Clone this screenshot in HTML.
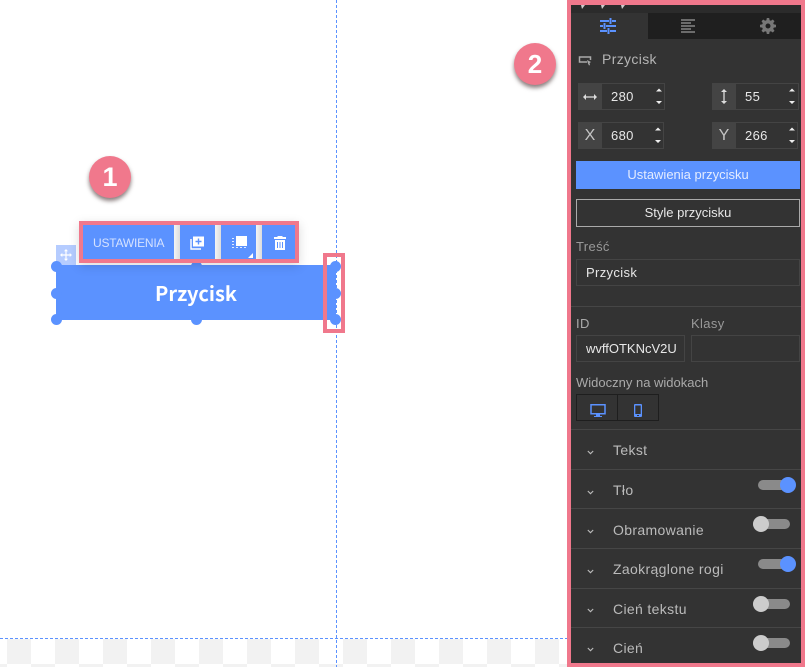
<!DOCTYPE html>
<html><head><meta charset="utf-8"><style>
html,body{margin:0;padding:0;background:#fff}
#p{position:relative;width:805px;height:667px;overflow:hidden;background:#fff;font-family:"Liberation Sans",sans-serif}
#p div,#p svg{position:absolute;box-sizing:border-box}
.t{white-space:nowrap;font-size:13px;line-height:16px;letter-spacing:.35px;color:#bbb}
.h{width:11px;height:11px;border-radius:50%;background:#5b92ff}
.lb{background:#444;color:#c4c4c4;text-align:center;font-size:16px;line-height:27px}
.in{border:1px solid #444;height:27px}
.v{color:#e8e8e8}
.ln{left:571px;width:230px;height:1px;background:#464646}
.s{background:linear-gradient(90deg,#f4f4f4,#dcdcdc);width:6px;top:225px;height:34px}
.tr{height:10px;border-radius:5px;background:#8a8a8a}
.kn{width:16px;height:16px;border-radius:50%}
</style></head><body><div id="p">
<svg style="left:0;top:639px" width="567" height="28"><g fill="#f2f2f2"><path d="M7 0h24v25H7zM55 0h24v25H55zM103 0h24v25h-24zM151 0h24v25h-24zM199 0h24v25h-24zM247 0h24v25h-24zM295 0h24v25h-24zM343 0h24v25h-24zM391 0h24v25h-24zM439 0h24v25h-24zM487 0h24v25h-24zM535 0h24v25h-24z"/><path d="M0 25h7v3H0zM31 25h24v3H31zM79 25h24v3H79zM127 25h24v3h-24zM175 25h24v3h-24zM223 25h24v3h-24zM271 25h24v3h-24zM319 25h24v3h-24zM367 25h24v3h-24zM415 25h24v3h-24zM463 25h24v3h-24zM511 25h24v3h-24zM559 25h8v3h-8z"/></g></svg>
<svg style="left:0;top:0" width="567" height="667"><path d="M0 638.5H567M336.5 0V667" stroke="#5b92ff" stroke-width="1" stroke-dasharray="3 2" fill="none"/></svg>

<div style="left:89px;top:156px;width:42px;height:42px;border-radius:50%;background:#f0788c;box-shadow:0 3px 4px rgba(60,40,40,.6);color:#fff;font-size:27px;font-weight:bold;line-height:42px;text-align:center">1</div>
<div style="left:514px;top:43px;width:42px;height:42px;border-radius:50%;background:#f0788c;box-shadow:0 3px 4px rgba(60,40,40,.6);color:#fff;font-size:26px;font-weight:bold;line-height:42px;text-align:center">2</div>

<div style="left:56px;top:245px;width:20px;height:20px;background:#b5ccff"></div>
<svg style="left:60px;top:249px" width="12" height="12" viewBox="0 0 12 12"><path d="M6 2v8M2 6h8" stroke="#fff" stroke-width="1.200" fill="none"/><path d="M6 0l2 2.300H4zM6 12l2-2.300H4zM0 6l2.300-2v4zM12 6L9.700 4v4z" fill="#fff"/></svg>

<div style="left:56px;top:265px;width:280px;height:55px;background:#5b92ff;color:#fff;font:bold 20px/55px 'Noto Sans CJK JP',sans-serif;text-align:center">Przycisk</div>

<div style="left:323px;top:253px;width:22px;height:80px;border:4px solid #f0788c"></div>
<div class="h" style="left:51px;top:261px"></div><div class="h" style="left:191px;top:261px"></div><div class="h" style="left:330px;top:261px"></div>
<div class="h" style="left:51px;top:288px"></div><div class="h" style="left:330px;top:288px"></div>
<div class="h" style="left:51px;top:314px"></div><div class="h" style="left:191px;top:314px"></div><div class="h" style="left:330px;top:314px"></div>

<div style="left:79px;top:221px;width:220px;height:42px;background:#5b92ff;border:4px solid #f0788c;box-shadow:0 3px 10px rgba(0,0,0,.15)"></div>
<div class="t" style="left:93px;top:235px;font-size:12px;color:#d5e2ff;letter-spacing:-.2px">USTAWIENIA</div>
<div class="s" style="left:174px"></div><div class="s" style="left:215px"></div><div class="s" style="left:256px"></div>
<svg style="left:190px;top:235px" width="15" height="15" viewBox="0 0 15 15"><path d="M3 1.500h11v10H3zM7.800 3.500v2.300H5.500v1.400h2.300v2.300h1.400V7.200h2.300V5.800H9.200V3.500z" fill="#fff" fill-rule="evenodd"/><path d="M1 4v10h10" fill="none" stroke="#fff" stroke-width="1.400"/></svg>
<svg style="left:232px;top:236px" width="15" height="14" viewBox="0 0 15 14"><rect x="4" y="0" width="11" height="10" fill="#fff"/><path d="M0 2h2v1H0zM0 5h2v1H0zM0 8h2v1H0zM0 11h2v1H0zM4 11h2v1H4zM8 11h2v1H8zM12 11h2v1h-2z" fill="#fff" opacity=".8"/></svg>
<svg style="left:248px;top:253px" width="5" height="5"><path d="M5 0v5H0z" fill="#fff"/></svg>
<svg style="left:274px;top:236px" width="12" height="14" viewBox="0 0 12 14"><path d="M4 0h4l1 1h3v2H0V1h3zM1 4h10v10H1zM3 6v6h1V6zM5.500 6v6h1V6zM8 6v6h1V6z" fill="#fff" fill-rule="evenodd"/></svg>

<div style="left:567px;top:0;width:238px;height:667px;background:#333;border:4px solid #f0788c;border-top-width:5px"></div>
<div style="left:571px;top:5px;width:230px;height:8px;background:#2b2b2b"></div>
<svg style="left:579px;top:5px" width="50" height="5"><path d="M2 0h4L3 4zM22 0h4L23 4zM42 0h4L43 4z" fill="#ccc"/></svg>
<div style="left:571px;top:13px;width:230px;height:26px;background:#1f1f1f"></div>
<div style="left:571px;top:13px;width:77px;height:26px;background:#333"></div>
<svg style="left:600px;top:18px" width="16" height="16" viewBox="0 0 16 16"><path d="M0 3h9M12 3h4M0 8h3M6 8h10M0 13h7M10 13h6" stroke="#5b92ff" stroke-width="2" fill="none"/><path d="M10.500 0v6M4.500 5v6M8.500 10v6" stroke="#5b92ff" stroke-width="2" fill="none"/></svg>
<svg style="left:681px;top:19px" width="14" height="15" viewBox="0 0 14 15"><path d="M0 1h14M0 4h10M0 7h14M0 10h10M0 13h14" stroke="#777" stroke-width="1.800" fill="none"/></svg>
<svg style="left:760px;top:18px" width="16" height="16" viewBox="0 0 16 16"><path d="M6.800 0h2.400l.4 2.200 1.300.6 1.900-1.300 1.700 1.700-1.300 1.900.6 1.300 2.200.4v2.400l-2.200.4-.6 1.300 1.300 1.900-1.700 1.700-1.900-1.300-1.300.6-.4 2.200H6.800l-.4-2.200-1.300-.6-1.900 1.300-1.700-1.700 1.300-1.900-.6-1.300L0 9.200V6.800l2.200-.4.6-1.300-1.300-1.900 1.700-1.700 1.900 1.300 1.300-.6zM8 5.500a2.500 2.500 0 1 0 0 5 2.500 2.500 0 0 0 0-5z" fill="#777" fill-rule="evenodd"/></svg>

<svg style="left:578px;top:55px" width="14" height="11" viewBox="0 0 14 11"><path d="M9 7H1.500V2h11v3" fill="none" stroke="#aaa" stroke-width="1.500"/><path d="M9 5l4 2-1.500 1 .5 2-1 .5-1-2z" fill="#aaa"/></svg>
<div class="t" style="left:602px;top:51px;font-size:14px;color:#b5b5b5">Przycisk</div>

<div class="in" style="left:578px;top:83px;width:87px"></div><div class="lb" style="left:578px;top:83px;width:24px;height:27px"></div>
<svg style="left:583px;top:93px" width="14" height="8" viewBox="0 0 14 8"><path d="M2 4h10" stroke="#ddd" stroke-width="1.300"/><path d="M0 4l3-3v6zM14 4l-3-3v6z" fill="#ddd"/></svg>
<div class="t v" style="left:611px;top:89px">280</div>
<div class="in" style="left:712px;top:83px;width:87px"></div><div class="lb" style="left:712px;top:83px;width:24px;height:27px"></div>
<svg style="left:720px;top:89px" width="8" height="15" viewBox="0 0 8 15"><path d="M4 2v11" stroke="#ddd" stroke-width="1.300"/><path d="M4 0l3 3H1zM4 15l3-3H1z" fill="#ddd"/></svg>
<div class="t v" style="left:745px;top:89px">55</div>
<div class="in" style="left:578px;top:122px;width:86px"></div><div class="lb" style="left:578px;top:122px;width:24px;height:27px">X</div>
<div class="t v" style="left:611px;top:128px">680</div>
<div class="in" style="left:712px;top:122px;width:86px"></div><div class="lb" style="left:712px;top:122px;width:24px;height:27px">Y</div>
<div class="t v" style="left:745px;top:128px">266</div>
<svg style="left:655px;top:87px" width="8" height="20"><path d="M1 4.500l3-3 3 3zM1 14l3 3 3-3z" fill="#eee"/></svg>
<svg style="left:788px;top:87px" width="8" height="20"><path d="M1 4.500l3-3 3 3zM1 14l3 3 3-3z" fill="#eee"/></svg>
<svg style="left:654px;top:126px" width="8" height="20"><path d="M1 4.500l3-3 3 3zM1 14l3 3 3-3z" fill="#eee"/></svg>
<svg style="left:788px;top:126px" width="8" height="20"><path d="M1 4.500l3-3 3 3zM1 14l3 3 3-3z" fill="#eee"/></svg>

<div style="left:576px;top:161px;width:224px;height:28px;background:#5b92ff;color:#e4ecff;font-size:13px;line-height:28px;text-align:center">Ustawienia przycisku</div>
<div style="left:576px;top:199px;width:224px;height:28px;border:1px solid #aaa;color:#e8e8e8;font-size:13px;line-height:26px;text-align:center">Style przycisku</div>

<div class="t" style="left:576px;top:239px;color:#999">Treść</div>
<div class="in" style="left:576px;top:259px;width:224px"></div>
<div class="t v" style="left:586px;top:265px">Przycisk</div>
<div class="ln" style="top:306px"></div>

<div class="t" style="left:576px;top:316px;color:#aaa">ID</div>
<div class="t" style="left:691px;top:316px;color:#999">Klasy</div>
<div class="in" style="left:576px;top:335px;width:109px"></div>
<div class="t v" style="left:586px;top:341px;letter-spacing:0">wvffOTKNcV2U</div>
<div class="in" style="left:691px;top:335px;width:109px"></div>

<div class="t" style="left:576px;top:375px;color:#aaa;letter-spacing:0">Widoczny na widokach</div>
<div style="left:576px;top:394px;width:83px;height:27px;border:1px solid #1e1e1e"></div>
<div style="left:617px;top:394px;width:1px;height:27px;background:#1e1e1e"></div>
<svg style="left:590px;top:404px" width="16" height="13" viewBox="0 0 16 13"><path d="M1 .8h14v9H1z" fill="none" stroke="#5b92ff" stroke-width="1.500"/><path d="M6 10.500h4V12h2v1H4v-1h2z" fill="#5b92ff"/></svg>
<svg style="left:634px;top:404px" width="8" height="13" viewBox="0 0 8 13"><path d="M1 0h6a1 1 0 0 1 1 1v11a1 1 0 0 1-1 1H1a1 1 0 0 1-1-1V1a1 1 0 0 1 1-1zM1.300 1.500v8.500h5.400V1.500zM3 11v1h2v-1z" fill="#5b92ff" fill-rule="evenodd"/></svg>

<div class="ln" style="top:429px"></div><div class="ln" style="top:469px"></div><div class="ln" style="top:508px"></div><div class="ln" style="top:548px"></div><div class="ln" style="top:588px"></div><div class="ln" style="top:627px"></div>

<div class="t" style="left:613px;top:442px;font-size:14px">Tekst</div>
<div class="t" style="left:613px;top:482px;font-size:14px">Tło</div>
<div class="t" style="left:613px;top:522px;font-size:14px">Obramowanie</div>
<div class="t" style="left:613px;top:561px;font-size:14px">Zaokrąglone rogi</div>
<div class="t" style="left:613px;top:601px;font-size:14px">Cień tekstu</div>
<div class="t" style="left:613px;top:640px;font-size:14px">Cień</div>
<svg style="left:587px;top:450px" width="7" height="206" viewBox="0 0 7 206"><g fill="none" stroke="#bbb" stroke-width="1.100"><path d="M.8 1l2.700 2.700L6.200 1M.8 41l2.700 2.700L6.200 41M.8 80l2.700 2.700L6.200 80M.8 120l2.700 2.700L6.200 120M.8 159l2.700 2.700L6.200 159M.8 198l2.700 2.700L6.200 198"/></g></svg>

<div class="tr" style="left:758px;top:480px;width:28px"></div><div class="kn" style="left:780px;top:477px;background:#5b92ff"></div>
<div class="tr" style="left:753px;top:519px;width:37px"></div><div class="kn" style="left:753px;top:516px;background:#ccc"></div>
<div class="tr" style="left:758px;top:559px;width:28px"></div><div class="kn" style="left:780px;top:556px;background:#5b92ff"></div>
<div class="tr" style="left:753px;top:599px;width:37px"></div><div class="kn" style="left:753px;top:596px;background:#ccc"></div>
<div class="tr" style="left:753px;top:638px;width:37px"></div><div class="kn" style="left:753px;top:635px;background:#ccc"></div>
</div></body></html>
